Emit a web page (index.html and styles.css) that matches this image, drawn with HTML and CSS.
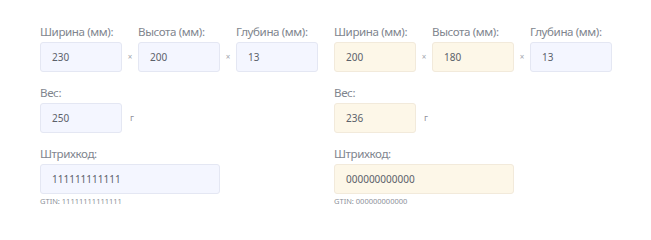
FILE: index.html
```html
<!DOCTYPE html>
<html lang="ru">
<head>
<meta charset="utf-8">
<link rel="stylesheet" href="styles.css">
</head>
<body>
<div class="page">
  <section class="col">
    <div class="row dims">
      <div class="field"><div class="label">Ширина (мм):</div><div class="input">230</div></div>
      <span class="x">×</span>
      <div class="field"><div class="label">Высота (мм):</div><div class="input">200</div></div>
      <span class="x">×</span>
      <div class="field"><div class="label">Глубина (мм):</div><div class="input">13</div></div>
    </div>
    <div class="row">
      <div class="field"><div class="label">Вес:</div><div class="input">250</div></div>
      <span class="unit">г</span>
    </div>
    <div class="row">
      <div class="field wide"><div class="label">Штрихкод:</div><div class="input">111111111111</div><div class="hint">GTIN: 11111111111111</div></div>
    </div>
  </section>
  <section class="col">
    <div class="row dims">
      <div class="field"><div class="label">Ширина (мм):</div><div class="input changed">200</div></div>
      <span class="x">×</span>
      <div class="field"><div class="label">Высота (мм):</div><div class="input changed">180</div></div>
      <span class="x">×</span>
      <div class="field"><div class="label">Глубина (мм):</div><div class="input">13</div></div>
    </div>
    <div class="row">
      <div class="field"><div class="label">Вес:</div><div class="input changed">236</div></div>
      <span class="unit">г</span>
    </div>
    <div class="row">
      <div class="field wide"><div class="label">Штрихкод:</div><div class="input changed">000000000000</div><div class="hint">GTIN: 000000000000</div></div>
    </div>
  </section>
</div>
</body>
</html>
```
FILE: styles.css
```css
html, body { margin: 0; padding: 0; background: #fff; }
body { font-family: "Noto Sans", "DejaVu Sans", sans-serif; color: #555a63; }
.page {
  display: flex;
  gap: 16px;
  padding: 24px 40px 0 40px;
}
.col { flex: 1; display: flex; flex-direction: column; gap: 13px; }
.row { display: flex; align-items: flex-end; }
.dims .field { flex: 1; }
.field { display: flex; flex-direction: column; width: 82px; }
.field.wide { width: 180px; }
.label {
  font-size: 11.6px;
  line-height: 15px;
  letter-spacing: -0.4px;
  margin-bottom: 3px;
  color: #80858e;
  white-space: nowrap;
}
.input {
  height: 30px;
  box-sizing: border-box;
  border: 1px solid #e4e7f3;
  background: #f4f6ff;
  border-radius: 3px;
  padding: 0 11px;
  font-size: 10px;
  line-height: 28px;
  color: #5c616a;
}
.input.changed { background: #fdf7e8; border-color: #f2eadb; }
.x {
  width: 16px;
  text-align: center;
  font-size: 8px;
  line-height: 30px;
  color: #a3a7ae;
}
.unit {
  margin-left: 8px;
  font-size: 9px;
  line-height: 30px;
  color: #8f939b;
}
.hint {
  margin-top: 2px;
  font-size: 7.5px;
  line-height: 10px;
  color: #8d9199;
  white-space: nowrap;
}
```
